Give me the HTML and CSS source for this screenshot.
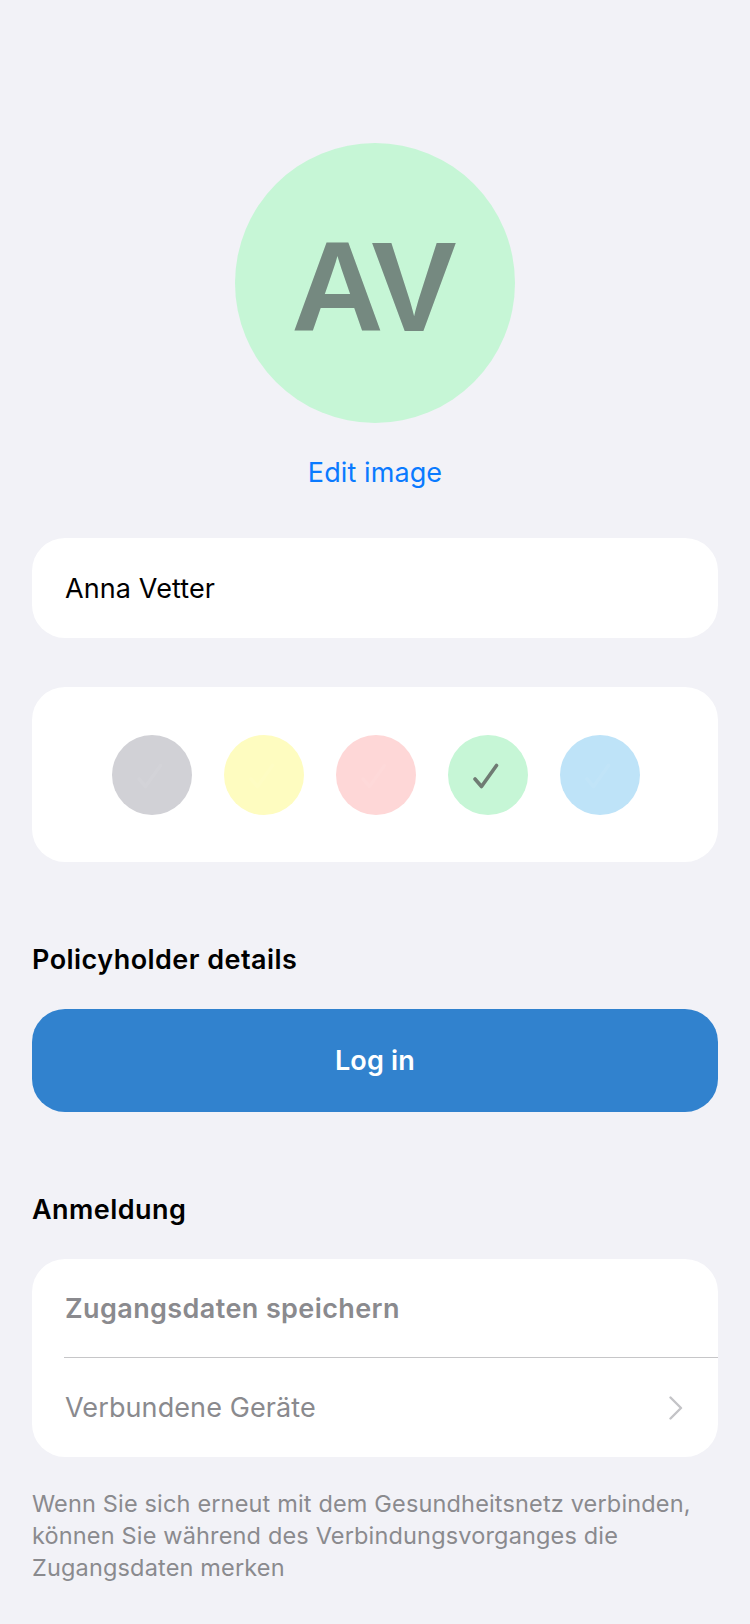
FILE: index.html
```html
<!DOCTYPE html>
<html lang="de">
<head>
<meta charset="utf-8">
<title>Profil</title>
<link rel="stylesheet" href="styles.css">
</head>
<body>
<main class="page">
  <section class="avatar-block">
    <div class="avatar"><span class="initials">AV</span></div>
    <a class="edit-link" href="#">Edit image</a>
  </section>

  <div class="card name-card">
    <span class="name">Anna Vetter</span>
  </div>

  <div class="card colors-card">
    <span class="swatch swatch-gray"><svg class="check faint" viewBox="0 0 26 26"><path d="M2 16 L8.5 23.5 L23.5 2.5"/></svg></span>
    <span class="swatch swatch-yellow"><svg class="check faint" viewBox="0 0 26 26"><path d="M2 16 L8.5 23.5 L23.5 2.5"/></svg></span>
    <span class="swatch swatch-red"><svg class="check faint" viewBox="0 0 26 26"><path d="M2 16 L8.5 23.5 L23.5 2.5"/></svg></span>
    <span class="swatch swatch-green"><svg class="check" viewBox="0 0 26 26"><path d="M2 16 L8.5 23.5 L23.5 2.5"/></svg></span>
    <span class="swatch swatch-blue"><svg class="check faint" viewBox="0 0 26 26"><path d="M2 16 L8.5 23.5 L23.5 2.5"/></svg></span>
  </div>

  <h2 class="section-title policy-title">Policyholder details</h2>
  <button class="login-btn" type="button">Log in</button>

  <h2 class="section-title login-title">Anmeldung</h2>
  <div class="card list-card">
    <div class="row row-strong">Zugangsdaten speichern</div>
    <div class="separator"></div>
    <div class="row row-nav">
      <span>Verbundene Geräte</span>
      <svg class="chevron" viewBox="0 0 14 24"><path d="M1.5 1.5 L12 12 L1.5 22.5"/></svg>
    </div>
  </div>
  <p class="footnote">Wenn Sie sich erneut mit dem Gesundheitsnetz verbinden, können Sie während des Verbindungsvorganges die Zugangsdaten merken</p>
</main>
</body>
</html>
```

FILE: styles.css
```css
* { box-sizing: border-box; }

html, body {
  margin: 0;
  padding: 0;
  background: #f2f2f7;
}

body {
  font-family: Inter, "Liberation Sans", Arial, sans-serif;
  color: #000;
  width: 750px;
  min-height: 1624px;
}

.page {
  padding: 0 32px;
  display: flex;
  flex-direction: column;
}

.avatar-block {
  display: flex;
  flex-direction: column;
  align-items: center;
  padding-top: 143px;
}

.avatar {
  width: 280px;
  height: 280px;
  border-radius: 50%;
  background: #c6f6d6;
  display: flex;
  align-items: center;
  justify-content: center;
}

.initials {
  font-family: "Liberation Sans", Arial, sans-serif;
  font-weight: 700;
  font-size: 128px;
  line-height: 1;
  letter-spacing: -3px;
  margin-right: 3px;
  color: #758980;
  transform: translate(-1px, 4px);
}

.edit-link {
  margin-top: 33px;
  font-size: 27px;
  line-height: 34px;
  color: #0a7aff;
  text-decoration: none;
  letter-spacing: 0.1px;
}

.card {
  background: #fff;
  border-radius: 33px;
}

.name-card {
  margin-top: 48px;
  height: 100px;
  padding: 0 33px;
  display: flex;
  align-items: center;
}

.name {
  font-size: 27px;
  letter-spacing: 0.1px;
}

.colors-card {
  margin-top: 49px;
  height: 175px;
  display: flex;
  align-items: center;
  justify-content: center;
  gap: 32px;
  padding-left: 1px;
}

.swatch {
  width: 80px;
  height: 80px;
  border-radius: 50%;
  display: flex;
  align-items: center;
  justify-content: center;
}

.swatch-gray { background: #d1d1d6; }
.swatch-yellow { background: #fefcc0; }
.swatch-red { background: #fed7d7; }
.swatch-green { background: #c6f6d6; }
.swatch-blue { background: #bee3f8; }

.check {
  width: 26px;
  height: 26px;
  fill: none;
  stroke: #6f7b73;
  stroke-width: 3.6;
  stroke-linecap: round;
  stroke-linejoin: round;
  transform: translate(-2px, 1px);
}

.check.faint {
  stroke: #ffffff;
  opacity: 0.05;
}

.section-title {
  margin: 0;
  font-size: 27px;
  line-height: 34px;
  font-weight: 600;
  letter-spacing: 0.45px;
}

.policy-title { margin-top: 81px; }

.login-btn {
  margin-top: 32px;
  height: 103px;
  border: none;
  border-radius: 33px;
  background: #3182ce;
  color: #fff;
  font-family: inherit;
  font-size: 27px;
  font-weight: 600;
  letter-spacing: 0.2px;
  padding: 0;
}

.login-title { margin-top: 81px; }

.list-card {
  margin-top: 32px;
  display: flex;
  flex-direction: column;
}

.row {
  height: 98px;
  padding: 0 35px 0 33px;
  display: flex;
  align-items: center;
  font-size: 27px;
  color: #8a8a8e;
  letter-spacing: 0.1px;
}

.row-strong {
  font-weight: 600;
  letter-spacing: 0.4px;
}

.row-nav {
  justify-content: space-between;
  height: 99px;
}

.separator {
  height: 1px;
  background: #c6c6c8;
  margin-left: 32px;
}

.chevron {
  width: 14px;
  height: 24px;
  fill: none;
  stroke: #c4c4c7;
  stroke-width: 2.4;
  stroke-linecap: round;
  stroke-linejoin: round;
}

.footnote {
  margin: 31px 0 0;
  font-size: 23.5px;
  line-height: 32px;
  color: #8a8a8e;
  letter-spacing: 0.16px;
}
```
